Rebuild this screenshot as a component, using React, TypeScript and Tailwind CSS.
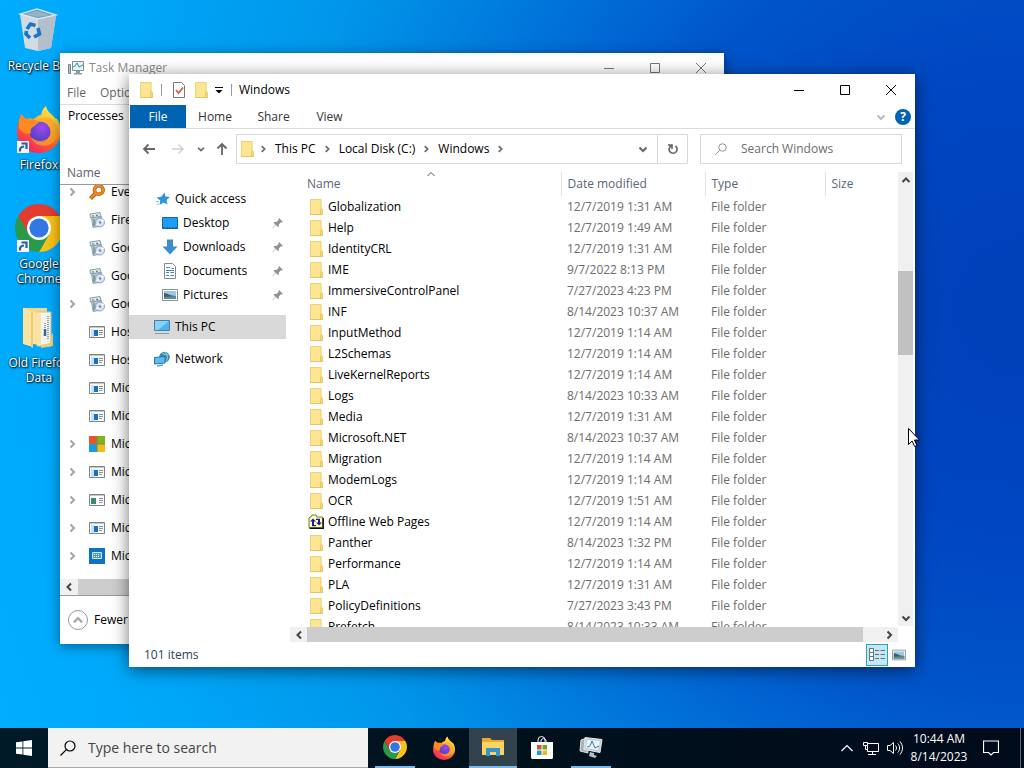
import type { ReactNode } from 'react'

type IconProps = { className?: string }

const files = [
  ['Globalization', '12/7/2019 1:31 AM'],
  ['Help', '12/7/2019 1:49 AM'],
  ['IdentityCRL', '12/7/2019 1:31 AM'],
  ['IME', '9/7/2022 8:13 PM'],
  ['ImmersiveControlPanel', '7/27/2023 4:23 PM'],
  ['INF', '8/14/2023 10:37 AM'],
  ['InputMethod', '12/7/2019 1:14 AM'],
  ['L2Schemas', '12/7/2019 1:14 AM'],
  ['LiveKernelReports', '12/7/2019 1:14 AM'],
  ['Logs', '8/14/2023 10:33 AM'],
  ['Media', '12/7/2019 1:31 AM'],
  ['Microsoft.NET', '8/14/2023 10:37 AM'],
  ['Migration', '12/7/2019 1:14 AM'],
  ['ModemLogs', '12/7/2019 1:14 AM'],
  ['OCR', '12/7/2019 1:51 AM'],
  ['Offline Web Pages', '12/7/2019 1:14 AM'],
  ['Panther', '8/14/2023 1:32 PM'],
  ['Performance', '12/7/2019 1:14 AM'],
  ['PLA', '12/7/2019 1:31 AM'],
  ['PolicyDefinitions', '7/27/2023 3:43 PM'],
  ['Prefetch', '8/14/2023 10:33 AM'],
]

function Chevron({ dir, thin, className }: IconProps & { dir: 'up' | 'down' | 'left' | 'right'; thin?: boolean }) {
  const d = {
    up: 'M2.500 8L6 4.500 9.500 8',
    down: 'M2.500 4.500L6 8l3.500-3.500',
    left: 'M8 2.500L4.500 6 8 9.500',
    right: 'M4.500 2.500L8 6l-3.500 3.500',
  }[dir]
  return (
    <svg className={className} viewBox="0 0 12 12" fill="none" stroke="currentColor" strokeWidth={thin ? 1 : 2}>
      <path d={d} />
    </svg>
  )
}

function Folder({ className = 'size-4' }: IconProps) {
  return (
    <svg className={className} viewBox="0 0 16 16">
      <path d="M2 0h11.500v9l1 1.500V16H2z" fill="#fde592" />
      <path d="M2.500 15.500V.5H13v9.500" fill="none" stroke="#edd27a" />
      <path d="M2 15.500h12.500" stroke="#e5c466" />
      <path d="M12.500 15.500V11l1.200-1.500.8 1.500v4.500z" fill="#f8d978" stroke="#e0bd5a" strokeWidth=".7" />
    </svg>
  )
}

function WebFolder({ className }: IconProps) {
  return (
    <svg className={className} viewBox="0 0 16 16">
      <path d="M1 13.500V4l1-1h1l1-2h4l1 2h5.500v10.500z" fill="#fffcc0" stroke="#77772c" />
      <path d="M1.500 14.300h13.800V4" fill="none" stroke="#111" strokeWidth="1.300" />
      <path d="M2 7.500l3-3 3 3H6v3.500h2v1.200H4V7.500zM14 8.500l-3 3-3-3h2V6H8V4.800h4v3.700z" fill="#201a9c" />
    </svg>
  )
}

function Chrome({ className }: IconProps) {
  return (
    <svg className={className} viewBox="2 2 44 44">
      <path d="M4.950 13A22 22 0 0 1 43.050 13H24L14.470 29.500Z" fill="#e33b2e" />
      <path d="M43.050 13A22 22 0 0 1 24 46L33.530 29.500 24 13Z" fill="#fbc116" />
      <path d="M24 46A22 22 0 0 1 4.950 13L14.470 29.500H33.530Z" fill="#2a9a48" />
      <circle cx="24" cy="24" r="11" fill="#fff" />
      <circle cx="24" cy="24" r="8.800" fill="#3277e6" />
    </svg>
  )
}

function Firefox({ className }: IconProps) {
  return (
    <svg className={className} viewBox="0 0 48 48">
      <defs>
        <linearGradient id="ff-body" x1=".8" y1=".05" x2=".25" y2=".95">
          <stop offset="0" stopColor="#fff04a" />
          <stop offset=".35" stopColor="#ffb42a" />
          <stop offset=".65" stopColor="#ff5a2e" />
          <stop offset="1" stopColor="#f0246a" />
        </linearGradient>
        <radialGradient id="ff-core" cx=".6" cy=".3" r=".8">
          <stop offset="0" stopColor="#9a4af0" />
          <stop offset="1" stopColor="#4a3cb8" />
        </radialGradient>
      </defs>
      <path
        d="M2 27C2 19 5 14 6 9l5 5c2-1 5-1 7 0 3-1 5-4 8-4 1-4 2-7 5-9 1 6 6 8 9 12l2 1c3 4 4 8 4 13a22 21 0 0 1-44 0z"
        fill="url(#ff-body)"
      />
      <circle cx="25" cy="27" r="10.500" fill="url(#ff-core)" />
      <path d="M4 14c4-2 9 0 12 1 4-1 6 0 8 3-3 0-3 3-6 4-2 1-3 3-2 6-4 2-9 0-12-5z" fill="#ff8a22" />
      <path d="M24 17c7-3 13 3 12 10-1 8-11 13-20 5 4 12 24 12 27-3 1-7-3-14-9-16-5-1-8 1-10 4z" fill="#ffa62c" opacity=".7" />
    </svg>
  )
}

function RecycleBin({ className }: IconProps) {
  return (
    <svg className={className} viewBox="0 0 48 48">
      <path d="M5 8l17 4 19-2-5 32-13 3-13-3z" fill="#d3dbe2" />
      <path d="M23 12l18-2-5 32-13 3z" fill="#b3bfca" />
      <path d="M5 8l17-5 19 6-18 4z" fill="#6fa3c4" stroke="#dce8f0" strokeWidth="1.300" />
      <path d="M10 8l12-3 13 4-12 2z" fill="#97b4c4" />
      <g fill="none" stroke="#1776cc" strokeWidth="3.600">
        <path d="M12 23l3.500-5 5 1.500" />
        <path d="M23 22l1.500 6-5.500 3" />
        <path d="M15 32l-4-4 .5-3" />
      </g>
    </svg>
  )
}

function OldFolder({ className }: IconProps) {
  return (
    <svg className={className} viewBox="0 0 48 48">
      <path d="M8 5h24v34H8z" fill="#f4d581" />
      <path d="M22 9h14v34H22z" fill="#f3f3ee" stroke="#c8c3a8" />
      <path d="M33 13v24M30 20v13" stroke="#9aa3a8" strokeDasharray="1 1" strokeWidth="2" />
      <path d="M30 26v7" stroke="#2c6e98" strokeWidth="2.500" />
      <path d="M8 5l18 6v31l-8-1v3L8 41z" fill="#fbe4a0" />
      <path d="M16 8v36l2 1V9z" fill="#eccb7a" />
      <path d="M26 42l9-2 2-10 1 1v12l-12 2z" fill="#f1cd72" />
    </svg>
  )
}

function Shortcut() {
  return (
    <svg className="absolute bottom-0 left-0.5 size-3" viewBox="0 0 12 12">
      <path d="M0 0h12v12H0z" fill="#f4f7fa" />
      <path d="M3 10.500c-.5-3 1-5 4-5M4.500 2.500h5V8" fill="none" stroke="#2a5ba8" strokeWidth="2.200" />
    </svg>
  )
}

function Monitor({ className }: IconProps) {
  return (
    <svg className={className} viewBox="0 0 16 16">
      <path d="M.5 1.500h15v10H.5z" fill="#4cb4ee" stroke="#4a7ea0" />
      <path d="M1 2h14L4 11H1z" fill="#86d2f8" />
      <path d="M1 14.500h14" stroke="#75a0b8" />
    </svg>
  )
}

function TaskGraph({ className }: IconProps) {
  return (
    <svg className={className} viewBox="0 0 16 16">
      <path d="M4.500 1.500h11v9h-11z" fill="#e3f3f4" stroke="#7c9297" />
      <path d="M5 7l2-1 2-3 2 4 4-2" fill="none" stroke="#2f8f95" />
      <path d="M8 11h4v2h2v1.500H6V13h2z" fill="#8f9da2" />
      <path d="M.5 4.500h2v9h-2z" fill="#b8c5c9" stroke="#75858a" />
    </svg>
  )
}

function Picture({ className }: IconProps) {
  return (
    <svg className={className} viewBox="0 0 16 16">
      <path d="M.5 2.500h15v11H.5z" fill="#fff" stroke="#8494a0" />
      <path d="M2 4h12v8H2z" fill="#9cc8e6" />
      <path d="M2 6c4 0 5 3 12 3v3H2z" fill="#34617c" />
      <path d="M2 10l12-1v3H2z" fill="#638c8a" />
    </svg>
  )
}

function AppWindow({ green, className }: IconProps & { green?: boolean }) {
  return (
    <svg className={className} viewBox="0 0 16 16">
      <path d="M.5 2.500h15v11H.5z" fill="#fff" stroke="#7b8388" />
      <path d="M1 3.500h14" stroke="#c3cace" />
      <path d={green ? 'M2 6h5v6H2z' : 'M5 6h4v6H5z'} fill={green ? '#3d8a70' : '#1470c4'} />
      <path d="M10 6.500h4M10 8.500h4M10 10.500h3" stroke="#7d8d99" />
      {!green && <path d="M2 5h3v8H2z" fill="#c4e2f3" />}
    </svg>
  )
}

function Installer({ className }: IconProps) {
  return (
    <svg className={className} viewBox="0 0 16 16">
      <path d="M1 2l10-1.500 1 4L1.500 6z" fill="#dde8ea" stroke="#75898f" strokeWidth=".8" />
      <path d="M2.500 6l10-1.500V14l-8.500 1.500z" fill="#b9cbd6" stroke="#8196a6" strokeWidth=".8" />
      <path d="M3 4h2M7 3.300h2M5 7v7" stroke="#3f786c" />
      <circle cx="11" cy="10.500" r="4.500" fill="#d8e3f6" stroke="#7d8fb8" strokeWidth=".8" />
      <path d="M11 10.500L8 14l-1-2zM11 10.500L14 7l1 2z" fill="#fff" />
      <circle cx="11" cy="10.500" r="1.300" fill="#7489ac" />
    </svg>
  )
}

function Magnifier({ className }: IconProps) {
  return (
    <svg className={className} viewBox="0 0 16 16" fill="none">
      <circle cx="9.800" cy="6" r="4.300" stroke="#b85506" strokeWidth="3.600" />
      <path d="M6.500 9.500L1.500 14.500" stroke="#b85506" strokeWidth="4" />
      <circle cx="9.800" cy="6" r="4.300" stroke="#f58a1c" strokeWidth="2.200" />
      <path d="M6.500 9.500L2 14" stroke="#f58a1c" strokeWidth="2.400" />
    </svg>
  )
}

function MsLogo({ className }: IconProps) {
  return (
    <svg className={className} viewBox="0 0 16 16">
      <path d="M0 0h16v16H0z" fill="#7d8a5a" />
      <path d="M0 0h7.500v7.500H0z" fill="#e8532a" />
      <path d="M8.500 0H16v7.500H8.500z" fill="#7db512" />
      <path d="M0 8.500h7.500V16H0z" fill="#179be8" />
      <path d="M8.500 8.500H16V16H8.500z" fill="#f4ba16" />
    </svg>
  )
}

function Keyboard({ className }: IconProps) {
  return (
    <svg className={className} viewBox="0 0 16 16">
      <path d="M0 0h16v16H0z" fill="#1171c8" />
      <path d="M3.500 4.500h9v6h-9z" fill="#4f98dc" stroke="#d3e7fa" />
      <path d="M5 6.500h6M5 8.500h6" stroke="#e6f2fc" strokeDasharray="1 1" />
    </svg>
  )
}

function SearchGlass({ className }: IconProps) {
  return (
    <svg className={className} viewBox="0 0 16 16" fill="none" stroke="currentColor" strokeWidth="1.200">
      <circle cx="10" cy="6" r="5" />
      <path d="M6.300 9.700L.5 15.500" />
    </svg>
  )
}

function Pin() {
  return (
    <svg className="ml-auto size-3" viewBox="0 0 12 12" fill="#8d9296">
      <path d="M7 1l4 4-1.300.6-.8-.3-2 2.200-.1 2-.8.6-2-2L.8 11.200.5 11l3-3.300-2-2 .8-.8 2.100.1 2.200-2.100L6.400 2z" />
    </svg>
  )
}

function WindowControls({ className }: IconProps) {
  return (
    <div className={`flex ${className}`}>
      <button aria-label="Minimize" className="flex h-full w-[46px] items-center justify-center">
        <svg className="size-3" viewBox="0 0 12 12" stroke="currentColor"><path d="M1 6.500h10" /></svg>
      </button>
      <button aria-label="Maximize" className="flex h-full w-[46px] items-center justify-center">
        <svg className="size-3" viewBox="0 0 12 12" fill="none" stroke="currentColor"><path d="M1.500 1.500h9v9h-9z" /></svg>
      </button>
      <button aria-label="Close" className="flex h-full w-[46px] items-center justify-center">
        <svg className="size-3" viewBox="0 0 12 12" stroke="currentColor"><path d="M1 1l10 10M11 1L1 11" /></svg>
      </button>
    </div>
  )
}

function DesktopIcon({ label, children }: { label: string; children: ReactNode }) {
  return (
    <button className="flex h-[99px] w-full flex-col items-center text-center leading-[15px] text-white [text-shadow:1px_1px_2px_#000,0_0_2px_#000]">
      <span className="relative mb-1 size-12">{children}</span>
      <span className="w-[76px]">{label}</span>
    </button>
  )
}

const processes: { name: string; icon: ReactNode; expand?: boolean }[] = [
  { name: 'Everything', icon: <Magnifier className="size-4" />, expand: true },
  { name: 'Firefox', icon: <Installer className="size-4" /> },
  { name: 'Google', icon: <Installer className="size-4" /> },
  { name: 'Google', icon: <Installer className="size-4" /> },
  { name: 'Google', icon: <Installer className="size-4" />, expand: true },
  { name: 'Host Process', icon: <AppWindow className="size-4" /> },
  { name: 'Host Process', icon: <AppWindow className="size-4" /> },
  { name: 'Microsoft', icon: <AppWindow className="size-4" /> },
  { name: 'Microsoft', icon: <AppWindow className="size-4" /> },
  { name: 'Microsoft', icon: <MsLogo className="size-4" />, expand: true },
  { name: 'Microsoft', icon: <AppWindow className="size-4" />, expand: true },
  { name: 'Microsoft', icon: <AppWindow green className="size-4" />, expand: true },
  { name: 'Microsoft', icon: <AppWindow className="size-4" />, expand: true },
  { name: 'Microsoft', icon: <Keyboard className="size-4" />, expand: true },
]

function TaskManager() {
  return (
    <section className="absolute top-[53px] right-[300px] bottom-[84px] left-[60px] flex flex-col overflow-hidden bg-white shadow-[0_2px_12px_rgba(0,0,0,0.45)]">
      <header className="flex h-[29px] shrink-0 items-center pl-2 text-[#8a8a8a]">
        <TaskGraph className="mr-[5px] size-4" />
        <h2 className="flex-1">Task Manager</h2>
        <WindowControls className="h-full text-[#777]" />
      </header>
      <nav className="flex h-[22px] shrink-0 items-center gap-3.5 pl-[7px] text-[#666]">
        <button>File</button>
        <button>Options</button>
      </nav>
      <div className="flex h-[22px] shrink-0 items-center border-t border-[#dcdcdc]">
        <button className="h-full border-r border-[#dcdcdc] px-2">Processes</button>
      </div>
      <div className="flex h-[59px] shrink-0 items-end border-b border-[#999] pb-[3px] pl-[7px] text-[#5c6370]">Name</div>
      <div className="min-h-0 flex-1 overflow-hidden">
        <ul className="-mt-[7px]">
          {processes.map((p, i) => (
            <li key={i} className="flex h-7 items-center">
              <span className="flex w-[29px] pl-1.5">
                {p.expand && <Chevron dir="right" className="size-3 text-[#a5a5a5]" />}
              </span>
              {p.icon}
              <span className="pl-1.5">{p.name}</span>
            </li>
          ))}
        </ul>
      </div>
      <div className="flex h-4 shrink-0 bg-[#f0f0f0]">
        <button aria-label="Scroll left" className="flex w-[18px] items-center justify-center">
          <Chevron dir="left" className="size-3 text-[#444]" />
        </button>
        <div className="flex-1 bg-[#cdcdcd]" />
      </div>
      <footer className="flex h-[49px] shrink-0 items-center border-t border-[#999] pl-2">
        <button className="flex items-center gap-1.5">
          <span className="flex size-5 items-center justify-center rounded-full border border-[#999]">
            <Chevron dir="up" className="size-3.5 text-[#aaa]" />
          </span>
          Fewer details
        </button>
      </footer>
    </section>
  )
}

const quickAccess = [
  {
    name: 'Desktop',
    icon: (
      <svg className="size-4" viewBox="0 0 16 16">
        <path d="M.5 2.500h15v11H.5z" fill="#1d9cf4" stroke="#1768a8" />
        <path d="M1 13h14" stroke="#0d4f86" strokeDasharray="2 1" />
      </svg>
    ),
  },
  {
    name: 'Downloads',
    icon: (
      <svg className="size-4" viewBox="0 0 16 16">
        <path d="M5 .5h6v7h4.500L8 15.500.5 7.500H5z" fill="#3b8dcb" />
      </svg>
    ),
  },
  {
    name: 'Documents',
    icon: (
      <svg className="size-4" viewBox="0 0 16 16">
        <path d="M2.500.5h8l3 3v12h-11z" fill="#fff" stroke="#7f8c95" />
        <path d="M4 4.500h4M9.500 5.500h2.500M4 7.500h8M4 9.500h3M8.500 9.500H12M4 12.500h3M8.500 12.500H12" stroke="#3f87b8" />
      </svg>
    ),
  },
  { name: 'Pictures', icon: <Picture className="size-4" /> },
]

function SideNav() {
  return (
    <nav className="w-[157px] shrink-0 pt-[15px]">
      <button className="flex h-6 w-full items-center gap-1 pl-[26px]">
        <svg className="size-4" viewBox="0 0 16 16">
          <path d="M9.500 1.500l1 4 4.500.5-3.500 3 1 4.500L8.500 11.500l-4 2.500.8-4.500L1.500 6.500l4.800-.7z" fill="#2c93dc" />
          <path d="M1 10.500h3M1.500 13h2" stroke="#7dbfe8" />
        </svg>
        Quick access
      </button>
      {quickAccess.map((item) => (
        <button key={item.name} className="flex h-6 w-full items-center gap-[5px] pr-0.5 pl-[33px]">
          {item.icon}
          {item.name}
          <Pin />
        </button>
      ))}
      <button className="mt-2 flex h-6 w-full items-center gap-[5px] bg-[#d9d9d9] pl-[25px]">
        <Monitor className="size-4" />
        This PC
      </button>
      <button className="mt-2 flex h-6 w-full items-center gap-[5px] pl-[25px]">
        <svg className="size-4" viewBox="0 0 16 16">
          <circle cx="10.500" cy="6" r="5.300" fill="#3a88b8" />
          <path d="M8 2c3 2 5 2 7 1M11 1c3 3 3 7 1 9" stroke="#9ad0ea" fill="none" />
          <path d="M.5 6.500l10.500-1v6.500L.5 13z" fill="#5cbcf0" stroke="#32739c" />
          <path d="M3 15l6-1" stroke="#5aa4c8" strokeWidth="1.500" />
        </svg>
        Network
      </button>
    </nav>
  )
}

function FileList() {
  return (
    <div className="min-h-0 flex-1 overflow-hidden">
      <table className="w-full table-fixed border-collapse text-left">
        <thead>
          <tr className="h-6 text-[#5a6678]">
            <th className="relative w-[271px] border-r border-[#e5e5e5] pl-[17px] font-normal">
              Name
              <Chevron dir="up" thin className="absolute -top-1 left-[135px] size-3 text-[#555]" />
            </th>
            <th className="w-36 border-r border-[#e5e5e5] pl-1.5 font-normal">Date modified</th>
            <th className="w-30 border-r border-[#e5e5e5] pl-1.5 font-normal">Type</th>
            <th className="pl-1.5 font-normal">Size</th>
          </tr>
        </thead>
        <tbody>
          {files.map(([name, date]) => (
            <tr key={name} className="h-[21px] text-[#6d6d6d]">
              <td className="pl-[18px] text-black">
                <span className="flex items-center gap-1">
                  {name === 'Offline Web Pages' ? <WebFolder className="size-4" /> : <Folder />}
                  {name}
                </span>
              </td>
              <td className="pl-1.5">{date}</td>
              <td className="pl-1.5">File folder</td>
              <td />
            </tr>
          ))}
        </tbody>
      </table>
    </div>
  )
}

function Explorer() {
  return (
    <section className="absolute top-[74px] right-[109px] bottom-[61px] left-[129px] flex flex-col bg-white shadow-[0_3px_16px_rgba(0,0,0,0.55)]">
      <header className="flex h-[31px] shrink-0 items-center pr-px pl-[9px]">
        <Folder />
        <span className="mx-[7px] h-3 w-px bg-[#999]" />
        <svg className="mx-[2px] size-4" viewBox="0 0 16 16" fill="none">
          <path d="M2.500.5h8l3 3v12h-11z" fill="#fff" stroke="#777" />
          <path d="M5 8l2.500 3L12 5.500" stroke="#d8604a" strokeWidth="1.800" />
        </svg>
        <span className="ml-1"><Folder /></span>
        <button aria-label="Customize toolbar" className="ml-[5px]">
          <svg className="size-2.5" viewBox="0 0 10 10"><path d="M1 2.500h8" stroke="#000" /><path d="M1.500 5h7L5 8.500z" /></svg>
        </button>
        <span className="mx-[7px] h-3 w-px bg-[#999]" />
        <h1 className="flex-1">Windows</h1>
        <WindowControls className="h-full" />
      </header>
      <div className="flex h-6 shrink-0 items-stretch border-b border-[#dadbdc] pl-px text-[#333]">
        <button className="w-14 bg-[#0063b1] text-white">File</button>
        <button className="w-[58px]">Home</button>
        <button className="w-[59px]">Share</button>
        <button className="w-[53px]">View</button>
        <div className="ml-auto flex items-center gap-2 pr-1">
          <button aria-label="Expand ribbon"><Chevron dir="down" className="size-3 text-[#bbb]" /></button>
          <button className="flex size-4 items-center justify-center rounded-full bg-[#0063b1] text-xs font-bold text-white">?</button>
        </div>
      </div>

      <div className="flex h-[43px] shrink-0 items-start pt-[5px] pr-[13px]">
        <div className="flex h-[30px] w-[107px] shrink-0 items-center gap-[5px] pl-2 text-[#666]">
          <button aria-label="Back" className="flex w-6 justify-center">
            <svg className="size-3.5" viewBox="0 0 14 14" fill="none" stroke="currentColor" strokeWidth="1.800"><path d="M13 7H2M6.500 2.500L2 7l4.500 4.500" /></svg>
          </button>
          <button aria-label="Forward" className="flex w-6 justify-center text-[#d0d0d0]">
            <svg className="size-3.5" viewBox="0 0 14 14" fill="none" stroke="currentColor" strokeWidth="1.500"><path d="M1 7h11M7.500 2.500L12 7l-4.500 4.500" /></svg>
          </button>
          <button aria-label="Recent locations" className="flex w-3 justify-center"><Chevron dir="down" className="size-2.5" /></button>
          <button aria-label="Up" className="flex w-5 justify-center">
            <svg className="size-3.5" viewBox="0 0 14 14" fill="none" stroke="currentColor" strokeWidth="1.800"><path d="M7 13V2M2.500 6.500L7 2l4.500 4.500" /></svg>
          </button>
        </div>
        <div className="flex h-[30px] min-w-0 flex-1 items-center border border-[#d9d9d9] pl-0.5">
          <Folder className="size-4" />
          {['This PC', 'Local Disk (C:)', 'Windows'].map((crumb) => (
            <span key={crumb} className="flex items-center">
              <Chevron dir="right" className="mx-[3px] size-2.5 text-[#666]" />
              <button className="pr-[3px] pl-1">{crumb}</button>
            </span>
          ))}
          <Chevron dir="right" className="mx-[3px] size-2.5 text-[#666]" />
          <button aria-label="Previous locations" className="mr-2 ml-auto"><Chevron dir="down" className="size-3 text-[#666]" /></button>
          <button aria-label="Refresh" className="flex h-full w-[30px] items-center justify-center border-l border-[#d9d9d9]">
            <svg className="size-3.5" viewBox="0 0 14 14" fill="none" stroke="#666" strokeWidth="1.600">
              <path d="M9.500 4A4 4 0 1 1 5 3.800M2 3h4v4" />
            </svg>
          </button>
        </div>
        <label className="ml-3 flex h-[30px] w-[202px] shrink-0 items-center border border-[#d9d9d9] text-[#888]">
          <SearchGlass className="mx-3.5 size-3" />
          <input aria-label="Search Windows" placeholder="Search Windows" className="min-w-0 flex-1 outline-none placeholder:text-[#6d6d6d]" />
        </label>
      </div>

      <div className="flex min-h-0 flex-1">
        <SideNav />
        <div className="ml-1 flex min-w-0 flex-1 flex-col">
          <FileList />
          <div className="flex h-[15px] shrink-0 bg-[#f0f0f0]">
            <button aria-label="Scroll left" className="flex w-[17px] items-center justify-center"><Chevron dir="left" className="size-3 text-[#444]" /></button>
            <div className="flex-1 bg-[#cdcdcd]" />
            <button aria-label="Scroll right" className="flex w-[35px] items-center justify-end pr-[3px]"><Chevron dir="right" className="size-3 text-[#444]" /></button>
          </div>
        </div>
        <div className="mr-0.5 mb-4 flex w-[15px] shrink-0 flex-col items-center bg-[#f0f0f0]">
          <button aria-label="Scroll up" className="h-4"><Chevron dir="up" className="size-3 text-[#444]" /></button>
          <div className="mt-[83px] h-[84px] w-full bg-[#c1c1c1]" />
          <button aria-label="Scroll down" className="mt-auto h-4"><Chevron dir="down" className="size-3 text-[#444]" /></button>
        </div>
      </div>

      <footer className="flex h-[25px] shrink-0 items-center pr-[5px] pl-[15px] text-[#2f4258]">
        <span className="flex-1">101 items</span>
        <button aria-label="Details view" className="flex size-[22px] items-center justify-center border border-[#26a0c4] bg-[#c5e6f3]">
          <svg className="size-4" viewBox="0 0 16 16" fill="none" stroke="#62747e">
            <path d="M.5 1.500h4v4h-4zM.5 5.500h4v4h-4zM.5 9.500h4v4h-4z" fill="#fff" />
            <path d="M6 3.500h4M11.500 3.500H16M6 7.500h4M11.500 7.500H16M6 11.500h4M11.500 11.500H16" />
          </svg>
        </button>
        <button aria-label="Thumbnail view" className="flex size-[22px] items-center justify-center"><Picture className="size-3.5" /></button>
      </footer>
    </section>
  )
}

function Taskbar() {
  return (
    <footer className="flex h-10 shrink-0 bg-[linear-gradient(90deg,#001a28,#00111c_50%,#000b1c)] text-white">
      <button aria-label="Start" className="flex w-12 items-center justify-center">
        <svg className="size-4" viewBox="0 0 16 16" fill="#fff">
          <path d="M0 2.300l6.500-.9v6.200H0zM7.300 1.300L16 0v7.600H7.300zM0 8.400h6.500v6.200L0 13.700zM7.300 8.400H16V16l-8.700-1.300z" />
        </svg>
      </button>
      <label className="flex w-80 items-center border-b border-[#aaa] bg-[#f2f2f2] pt-px text-black">
        <SearchGlass className="mx-3 size-4" />
        <input aria-label="Type here to search" placeholder="Type here to search" className="min-w-0 flex-1 text-sm outline-none placeholder:text-[#444]" />
      </label>
      <div className="ml-[3px] flex gap-px">
        <button aria-label="Google Chrome" className="flex w-12 flex-col items-center">
          <span className="flex flex-1 items-center"><Chrome className="size-6" /></span>
          <span className="h-0.5 w-10 bg-[#76b9ed]" />
        </button>
        <button aria-label="Firefox" className="flex w-12 items-center justify-center"><Firefox className="size-6" /></button>
        <button aria-label="File Explorer" className="flex w-12 flex-col items-center bg-[#33434d]">
          <span className="flex flex-1 items-center">
            <svg className="size-6" viewBox="0 0 24 24">
              <path d="M1 3h8l2 2h12v15H1z" fill="#e9a82e" />
              <path d="M1 7h22v13H1z" fill="#fcd461" />
              <path d="M5 21v-8h14v8h-4v-4H9v4z" fill="#3894cc" />
            </svg>
          </span>
          <span className="h-0.5 w-full bg-[#76b9ed]" />
        </button>
        <button aria-label="Microsoft Store" className="flex w-12 items-center justify-center">
          <svg className="size-6" viewBox="0 0 24 24">
            <path d="M8 8V4a3 3 0 0 1 7 0v4M11 8V4a3 3 0 0 1 5 0v4" fill="none" stroke="#eee" />
            <path d="M1 6h22v16l-1 1H2l-1-1z" fill="#fff" />
            <path d="M7 9h4.500v4.500H7z" fill="#d8512f" />
            <path d="M12.500 9H17v4.500h-4.500z" fill="#70aa24" />
            <path d="M7 14.500h4.500V19H7z" fill="#2398d5" />
            <path d="M12.500 14.500H17V19h-4.500z" fill="#efb527" />
          </svg>
        </button>
        <button aria-label="Task Manager" className="flex w-12 flex-col items-center">
          <span className="flex flex-1 items-center">
            <svg className="size-6" viewBox="0 0 24 24">
              <path d="M2 5l6-2 1 15-8-2z" fill="#a9b2b7" stroke="#dce2e5" />
              <path d="M6 2.500l17 2-2 13-16-3z" fill="#c6d0d4" stroke="#e4eaec" />
              <path d="M8 5l13 1-2 9-12-2z" fill="#e8f5fa" />
              <path d="M8 12l3-1 2-5 3 7 4-2" stroke="#327bb4" fill="none" />
              <path d="M11 17l4 1v2l3 1-2 2-6-2z" fill="#b9c1c4" />
            </svg>
          </span>
          <span className="h-0.5 w-10 bg-[#76b9ed]" />
        </button>
      </div>

      <div className="ml-auto flex items-center">
        <button aria-label="Show hidden icons" className="flex w-6 justify-center">
          <svg className="size-3" viewBox="0 0 12 12" fill="none" stroke="#fff" strokeWidth="1.200"><path d="M.5 9L6 3.500 11.500 9" /></svg>
        </button>
        <button aria-label="Network" className="flex w-6 justify-center">
          <svg className="size-4" viewBox="0 0 16 16" fill="none" stroke="#fff">
            <path d="M5 3.500h10.500v8H4.500V6M9.500 11.500v3M5 14.500h8M.5 2.500h4v3h-4zM2.500 5.500v4h2" />
          </svg>
        </button>
        <button aria-label="Volume" className="flex w-6 justify-center">
          <svg className="size-4" viewBox="0 0 16 16" fill="none" stroke="#fff">
            <path d="M.5 5.500h2.500l3.500-3v11l-3.500-3H.5zM8.500 5.500c1.300 1.500 1.300 3.500 0 5M10.800 3.500c2.400 2.700 2.400 6.300 0 9M13 1.500c3.300 4 3.300 9 0 13" />
          </svg>
        </button>
        <button className="w-16 text-center leading-[18px]">
          10:44 AM
          <br />
          8/14/2023
        </button>
        <button aria-label="Notifications" className="mr-[21px] ml-3 flex size-4 justify-center">
          <svg className="size-4" viewBox="0 0 16 16" fill="none" stroke="#fff" strokeWidth="1.200"><path d="M.5 1h15v11.500h-5L8 15l-2.500-2.500h-5z" /></svg>
        </button>
        <button aria-label="Show desktop" className="h-10 w-1 border-l border-[#5b6672]" />
      </div>
    </footer>
  )
}

export default function App() {
  return (
    <div className="flex h-screen flex-col overflow-hidden bg-[radial-gradient(circle_at_100%_40%,#0040b8_0%,#0046c2_20%,#0054c9_35%,#0074da_50%,#0096ea_66%,#00a8fa_86%,#00aeff_100%)] font-['Open_Sans','Noto_Sans',sans-serif] text-xs text-black select-none">
      <main className="relative min-h-0 flex-1">
        <div className="flex w-[78px] flex-col pt-1.5">
          <DesktopIcon label="Recycle Bin"><RecycleBin className="size-12" /></DesktopIcon>
          <DesktopIcon label="Firefox"><Firefox className="size-12" /><Shortcut /></DesktopIcon>
          <DesktopIcon label="Google Chrome"><Chrome className="size-12" /><Shortcut /></DesktopIcon>
          <DesktopIcon label="Old Firefox Data"><OldFolder className="size-12" /></DesktopIcon>
        </div>
        <TaskManager />
        <Explorer />
        {/* mouse pointer */}
        <svg className="absolute top-[428px] left-[908px] h-5 w-3" viewBox="0 0 12 20">
          <path d="M.5.5v16l3.600-3.500 2.500 5.500 2.300-1-2.400-5.500h5z" fill="#fff" stroke="#000" />
        </svg>
      </main>
      <Taskbar />
    </div>
  )
}
